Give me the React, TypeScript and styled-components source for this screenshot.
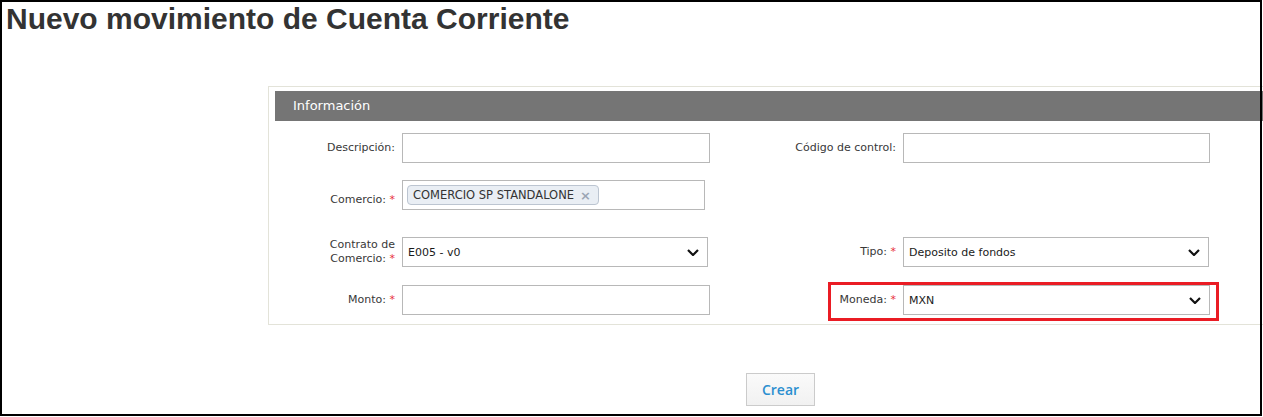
import React from "react";
import styled, { createGlobalStyle } from "styled-components";

const GlobalStyle = createGlobalStyle`
  html, body { margin: 0; padding: 0; background: #fff; overflow: hidden; }
  body { font-family: "DejaVu Sans", Verdana, sans-serif; }
`;

const Frame = styled.div`
  position: relative;
  width: 1263px;
  height: 417px;
  overflow: hidden;
  box-sizing: border-box;
  padding: 2px 0 0 2px;
  background: #fff;
  &::after {
    content: "";
    position: absolute;
    left: 0;
    top: 0;
    width: 1262px;
    height: 416px;
    border: 2px solid #000;
    box-sizing: border-box;
    pointer-events: none;
  }
`;

const Title = styled.h1`
  margin: 0 0 0 4px;
  font: bold 30px/34px "Liberation Sans", Arial, sans-serif;
  color: #333;
`;

const Panel = styled.section`
  margin: 50px 0 0 266px;
  width: 1100px;
  border: 1px solid #e3e3d9;
  padding: 4px 6px 9px 6px;
  box-sizing: border-box;
`;

const PanelHeader = styled.div`
  height: 30px;
  background: #757575;
  color: #fff;
  font-size: 13px;
  line-height: 30px;
  padding-left: 18px;
`;

const PanelBody = styled.div`
  padding-top: 12px;
`;

const Row = styled.div<{ $top: number }>`
  display: flex;
  gap: 67px;
  margin-top: ${(p) => p.$top}px;
`;

const Field = styled.div`
  position: relative;
  width: 434px;
  display: grid;
  grid-template-columns: 120px auto;
  column-gap: 7px;
  align-items: center;
`;

const Label = styled.label<{ $shift?: number }>`
  text-align: right;
  font-size: 11px;
  line-height: 14px;
  color: #383838;
  white-space: nowrap;
  padding-top: ${(p) => (p.$shift ? p.$shift * 2 : 0)}px;
`;

const Req = styled.span`
  color: #e8303a;
`;

const TextInput = styled.div<{ $w: number }>`
  width: ${(p) => p.$w}px;
  height: 30px;
  box-sizing: border-box;
  border: 1px solid #b8b8b8;
  background: #fff;
  display: flex;
  align-items: center;
`;

const SelectBox = styled(TextInput)`
  justify-content: space-between;
  padding: 0 8px 0 5px;
  font-size: 11px;
  color: #1a1a1a;
`;

const Chip = styled.span`
  display: inline-flex;
  align-items: center;
  gap: 6px;
  height: 20px;
  box-sizing: border-box;
  margin-left: 4px;
  padding: 0 7px 0 5px;
  border: 1px solid #bcc5d1;
  border-radius: 4px;
  background: #e9eef4;
  font-size: 11.5px;
  color: #333;
`;

const ChipX = styled.span`
  font-size: 13px;
  font-weight: bold;
  color: #9aa5b4;
`;

const Highlight = styled.div`
  position: absolute;
  left: 52px;
  top: -3px;
  right: -9px;
  bottom: -6px;
  border: 3px solid #ea1c24;
  pointer-events: none;
`;

const Footer = styled.div`
  margin-top: 48px;
  padding-left: 744px;
`;

const Button = styled.button`
  width: 69px;
  height: 33px;
  box-sizing: border-box;
  border: 1px solid #cbcbcb;
  background: linear-gradient(#fafafa, #f1f1f1);
  color: #2b8fd0;
  font: 600 14px/31px "Open Sans", sans-serif;
  padding: 0;
`;

const Chevron = () => (
  <svg width="12" height="7" viewBox="0 0 12 7">
    <polyline points="1,1 6,6 11,1" fill="none" stroke="#111" strokeWidth="2.2" />
  </svg>
);

export default function App() {
  return (
    <>
      <GlobalStyle />
      <Frame>
        <Title>Nuevo movimiento de Cuenta Corriente</Title>
        <Panel>
          <PanelHeader>Información</PanelHeader>
          <PanelBody>
            <Row $top={0}>
              <Field>
                <Label>Descripción:</Label>
                <TextInput $w={308} />
              </Field>
              <Field>
                <Label>Código de control:</Label>
                <TextInput $w={307} />
              </Field>
            </Row>
            <Row $top={17}>
              <Field>
                <Label $shift={5}>
                  Comercio: <Req>*</Req>
                </Label>
                <TextInput $w={303}>
                  <Chip>
                    COMERCIO SP STANDALONE<ChipX>×</ChipX>
                  </Chip>
                </TextInput>
              </Field>
            </Row>
            <Row $top={27}>
              <Field>
                <Label>
                  Contrato de
                  <br />
                  Comercio: <Req>*</Req>
                </Label>
                <SelectBox $w={306}>
                  <span>E005 - v0</span>
                  <Chevron />
                </SelectBox>
              </Field>
              <Field>
                <Label>
                  Tipo: <Req>*</Req>
                </Label>
                <SelectBox $w={306}>
                  <span>Deposito de fondos</span>
                  <Chevron />
                </SelectBox>
              </Field>
            </Row>
            <Row $top={18}>
              <Field>
                <Label>
                  Monto: <Req>*</Req>
                </Label>
                <TextInput $w={308} />
              </Field>
              <Field>
                <Label>
                  Moneda: <Req>*</Req>
                </Label>
                <SelectBox $w={307}>
                  <span>MXN</span>
                  <Chevron />
                </SelectBox>
                <Highlight />
              </Field>
            </Row>
          </PanelBody>
        </Panel>
        <Footer>
          <Button>Crear</Button>
        </Footer>
      </Frame>
    </>
  );
}
